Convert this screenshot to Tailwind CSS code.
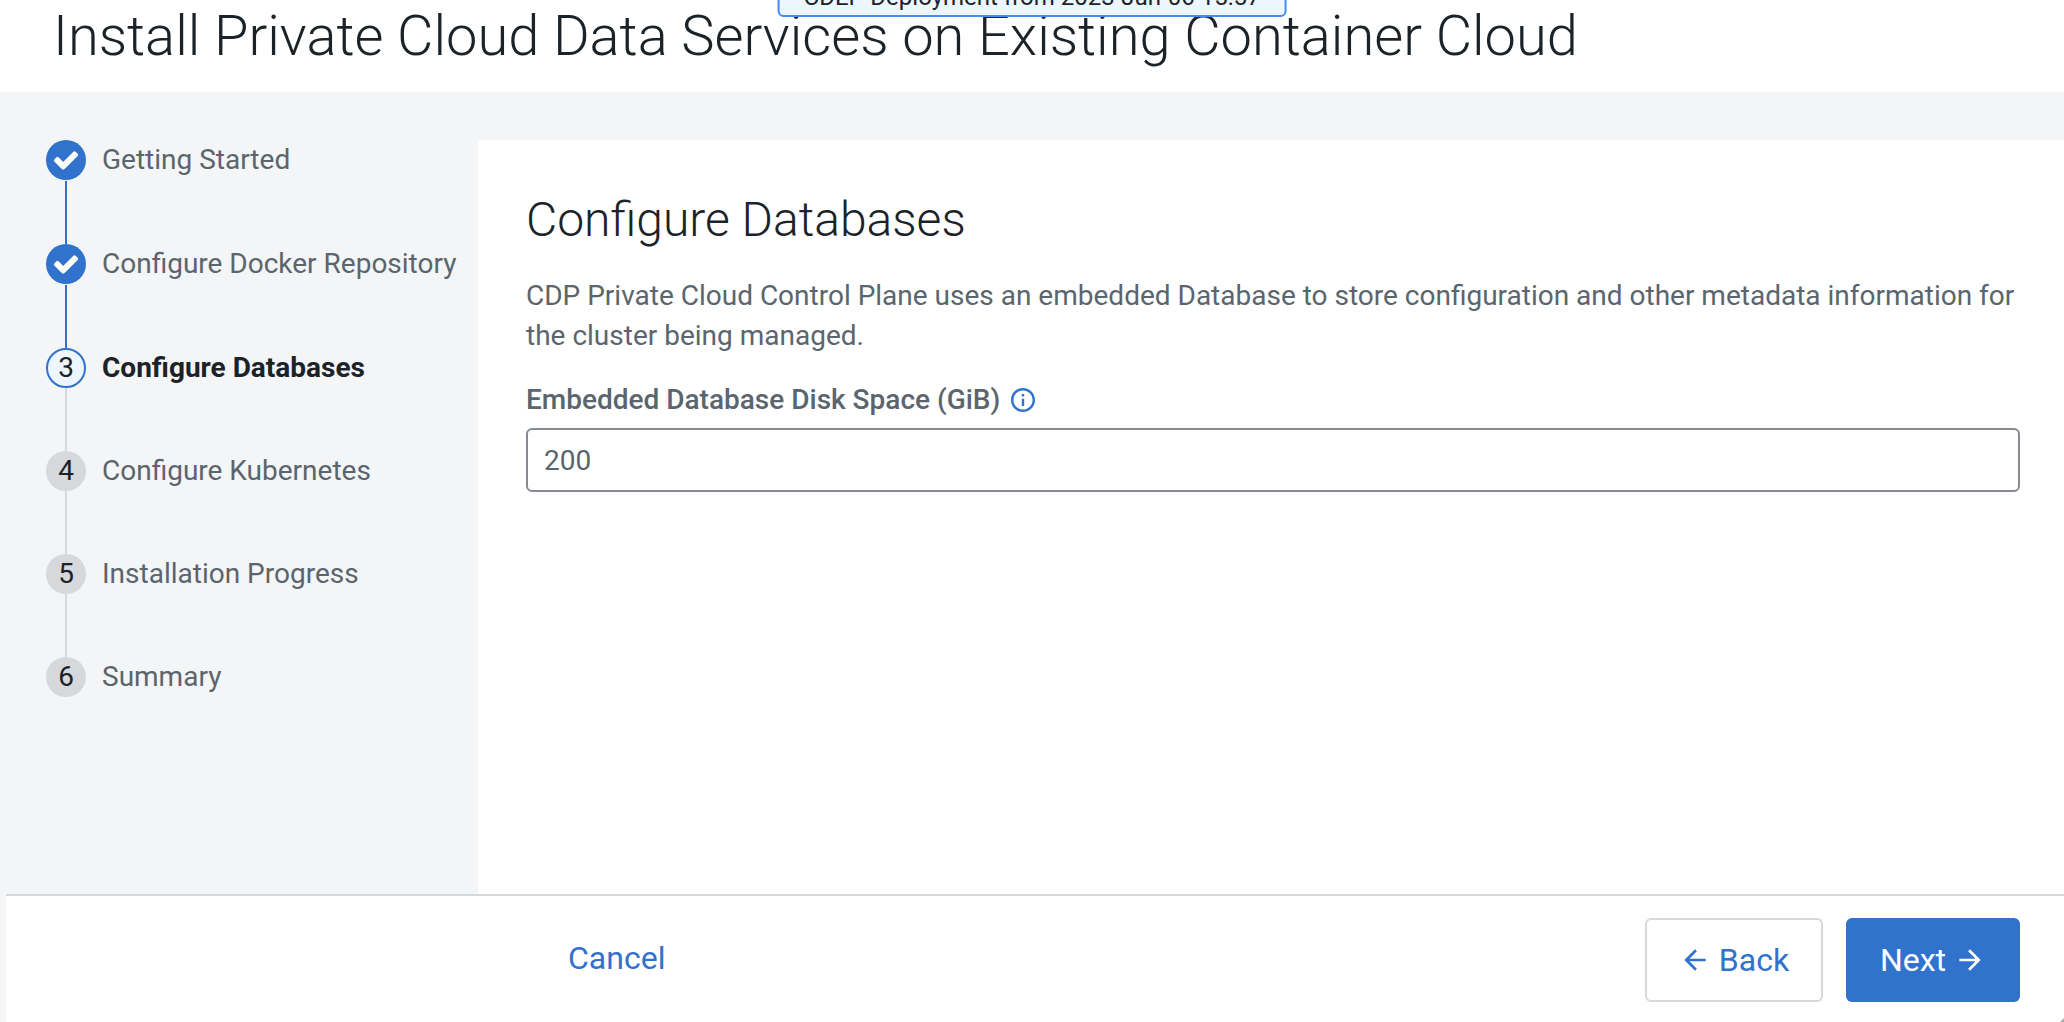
<!DOCTYPE html>
<html lang="en">

<head>
  <meta charset="UTF-8">
  <meta name="viewport" content="width=device-width, initial-scale=1.0">
  <title>Install Private Cloud Data Services</title>
  <script src="https://cdn.jsdelivr.net/npm/@tailwindcss/browser@4"></script>
</head>

<body class="relative flex flex-col min-h-screen overflow-hidden bg-[#f3f5f7] font-[Roboto,sans-serif] text-[28px] leading-10 text-[#5a656d]">

  <!-- Deployment badge -->
  <div class="absolute -top-6 left-1/2 -translate-x-1/2 h-[41px] px-6 flex items-center whitespace-nowrap rounded-md border-2 border-[#428cf4] bg-[#edf6fe] text-[24px] text-[#1b2329]">
    CDEP-Deployment from 2023-Jun-06 15:57
  </div>

  <header class="h-[92px] shrink-0 bg-white px-[53px]">
    <h1 class="text-[56px] leading-[72px] font-light text-[#1b2329]">Install Private Cloud Data Services on Existing Container Cloud</h1>
  </header>

  <div class="flex flex-1 pt-12">

    <!-- Wizard steps -->
    <nav class="w-[478px] shrink-0 pl-[46px]" aria-label="Steps">
      <ol>
        <li class="flex gap-4 h-[104px]">
          <div class="flex flex-col items-center">
            <span class="flex items-center justify-center size-10 shrink-0 rounded-full bg-[#3072cc]">
              <svg class="size-7 fill-white" viewBox="0 0 1792 1792"><path d="M1671 566q0 40-28 68l-724 724-136 136q-28 28-68 28t-68-28l-136-136-362-362q-28-28-28-68t28-68l136-136q28-28 68-28t68 28l294 295 656-657q28-28 68-28t68 28l136 136q28 28 28 68z"/></svg>
            </span>
            <span class="mt-px w-0.5 flex-1 bg-[#3072cc]"></span>
          </div>
          <span class="whitespace-nowrap">Getting Started</span>
        </li>
        <li class="flex gap-4 h-[104px]">
          <div class="flex flex-col items-center">
            <span class="flex items-center justify-center size-10 shrink-0 rounded-full bg-[#3072cc]">
              <svg class="size-7 fill-white" viewBox="0 0 1792 1792"><path d="M1671 566q0 40-28 68l-724 724-136 136q-28 28-68 28t-68-28l-136-136-362-362q-28-28-28-68t28-68l136-136q28-28 68-28t68 28l294 295 656-657q28-28 68-28t68 28l136 136q28 28 28 68z"/></svg>
            </span>
            <span class="mt-px w-0.5 flex-1 bg-[#3072cc]"></span>
          </div>
          <span class="whitespace-nowrap">Configure Docker Repository</span>
        </li>
        <li class="flex gap-4 h-[103px]" aria-current="step">
          <div class="flex flex-col items-center">
            <span class="flex items-center justify-center size-10 shrink-0 rounded-full border-2 border-[#3072cc] bg-[#edf6fe] text-[#1b2329]">3</span>
            <span class="w-0.5 flex-1 bg-[#d6d8dc]"></span>
          </div>
          <span class="whitespace-nowrap font-bold text-[#1b2329]">Configure Databases</span>
        </li>
        <li class="flex gap-4 h-[103px]">
          <div class="flex flex-col items-center">
            <span class="flex items-center justify-center size-10 shrink-0 rounded-full bg-[#d6d8dc] text-[#1b2329]">4</span>
            <span class="w-0.5 flex-1 bg-[#d6d8dc]"></span>
          </div>
          <span class="whitespace-nowrap">Configure Kubernetes</span>
        </li>
        <li class="flex gap-4 h-[103px]">
          <div class="flex flex-col items-center">
            <span class="flex items-center justify-center size-10 shrink-0 rounded-full bg-[#d6d8dc] text-[#1b2329]">5</span>
            <span class="w-0.5 flex-1 bg-[#d6d8dc]"></span>
          </div>
          <span class="whitespace-nowrap">Installation Progress</span>
        </li>
        <li class="flex gap-4">
          <span class="flex items-center justify-center size-10 shrink-0 rounded-full bg-[#d6d8dc] text-[#1b2329]">6</span>
          <span class="whitespace-nowrap">Summary</span>
        </li>
      </ol>
    </nav>

    <!-- Step content -->
    <main class="flex-1 min-w-0 bg-white pl-12 pr-11 pt-12">
      <h2 class="text-[48px] leading-[64px] font-light text-[#1b2329]">Configure Databases</h2>
      <p class="mt-6">CDP Private Cloud Control Plane uses an embedded Database to store configuration and other metadata information for the cluster being managed.</p>
      <div class="mt-6 flex items-center gap-[11px]">
        <label for="diskSpace" class="font-medium">Embedded Database Disk Space (GiB)</label>
        <button type="button" aria-label="More information">
          <svg class="size-6 fill-[#3072cc]" viewBox="2 2 20 20"><path d="M11 7h2v2h-2zm0 4h2v6h-2zm1-9C6.480 2 2 6.480 2 12s4.480 10 10 10 10-4.480 10-10S17.520 2 12 2zm0 18c-4.410 0-8-3.590-8-8s3.590-8 8-8 8 3.590 8 8-3.590 8-8 8z"/></svg>
        </button>
      </div>
      <input id="diskSpace" type="text" value="200" class="mt-2 block w-full h-16 px-4 rounded-md border-2 border-[#858b91] bg-white">
    </main>
  </div>

  <footer class="ml-1.5 h-32 shrink-0 flex items-start border-t-2 border-[#d6d8dc] bg-white pt-[22px] pl-[562px] pr-11 text-[32px] text-[#3072cc]">
    <button type="button" class="h-20">Cancel</button>
    <div class="ml-auto flex gap-[23px]">
      <button type="button" class="flex items-center justify-center gap-2 w-[178px] h-[84px] rounded-md border-2 border-[#d6d8dc] bg-white">
        <svg class="size-8 fill-current" viewBox="0 0 24 24"><path d="M20 11H7.830l5.590-5.590L12 4l-8 8 8 8 1.410-1.410L7.830 13H20v-2z"/></svg>
        Back
      </button>
      <button type="button" class="flex items-center justify-center gap-2 w-[174px] h-[84px] rounded-md bg-[#3072cc] text-white">
        Next
        <svg class="size-8 fill-current" viewBox="0 0 24 24"><path d="M12 4l-1.410 1.410L16.170 11H4v2h12.170l-5.580 5.590L12 20l8-8z"/></svg>
      </button>
    </div>
  </footer>

  <!-- Resize grip -->
  <svg class="absolute bottom-0 right-0 size-1 fill-[#a9a9a9]" viewBox="0 0 4 4"><path d="M4 0v4H0z"/></svg>

</body>

</html>
